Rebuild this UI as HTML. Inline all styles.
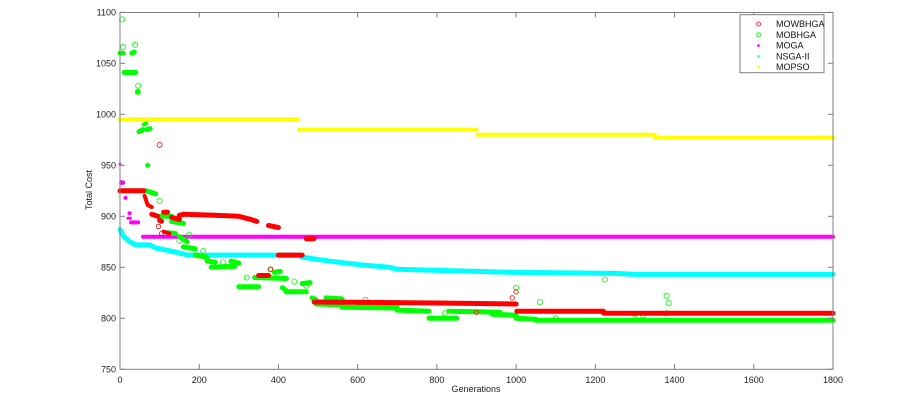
<!DOCTYPE html>
<html><head><meta charset="utf-8"><style>
html,body{margin:0;padding:0;background:#fff;width:920px;height:401px;overflow:hidden}
svg{display:block;font-family:"Liberation Sans",sans-serif}
</style></head><body>
<svg id="s" width="920" height="401" xmlns="http://www.w3.org/2000/svg"></svg>
<script>
var s=document.getElementById('s');
function X(g){return 120+g*(713/1800);}
function Y(c){return 369.3-(c-750)*1.02;}
var h='';
function line(pts,col,w){var p=pts.map(function(a){return X(a[0]).toFixed(1)+','+Y(a[1]).toFixed(1)}).join(' ');
 h+='<polyline points="'+p+'" fill="none" stroke="'+col+'" stroke-width="'+w+'" stroke-linecap="round" stroke-linejoin="round"/>';}
function circ(g,c,col,r){h+='<circle cx="'+X(g).toFixed(1)+'" cy="'+Y(c).toFixed(1)+'" r="'+(r||2.5)+'" fill="none" stroke="'+col+'" stroke-width="0.8"/>';}
function dot(g,c,col,r){h+='<circle cx="'+X(g).toFixed(1)+'" cy="'+Y(c).toFixed(1)+'" r="'+(r||2)+'" fill="'+col+'"/>';}
// MOPSO yellow
line([[0,995],[450,995]],'#ffff00',4);line([[452,985],[900,985]],'#ffff00',4);
line([[902,980],[1350,980]],'#ffff00',4);line([[1352,977],[1800,977]],'#ffff00',4);
// MOGA magenta
line([[58,880],[1800,880]],'#ff00ff',4);
dot(0,951,'#f0f',1.5);dot(4,933,'#f0f',2.5);dot(8,933,'#f0f',2);dot(14,918,'#f0f',2);dot(24,903,'#f0f',2);
line([[28,894],[46,894]],'#ff00ff',4);line([[20,898],[26,898]],'#ff00ff',3);
// NSGA-II cyan
line([[0,887],[10,880],[25,875],[40,872],[75,872],[90,869],[140,865],[170,862],[450,862],[460,860],[530,856],[620,852],[680,850],[700,848],[800,847],[900,846],[1000,845],[1250,844],[1300,843],[1800,843]],'#00ffff',5);
// MOBHGA green
var G='#00ff00';
line([[0,1060],[8,1060]],G,5);line([[10,1041],[40,1041]],G,5);line([[30,1060],[36,1061]],G,5);
dot(45,1022,G,3);line([[48,983],[58,985]],G,5);line([[60,990],[66,991]],G,4);line([[68,985],[76,986]],G,5);
line([[66,925],[90,922]],G,5);dot(70,950,G,2.5);
line([[100,900],[130,900]],G,5);line([[120,884],[140,883]],G,5);line([[130,895],[160,893]],G,5);
line([[150,880],[170,875]],G,5);line([[160,870],[190,868]],G,5);line([[190,862],[220,860]],G,5);
line([[220,856],[240,855]],G,5);line([[230,850],[290,851]],G,5);line([[280,856],[300,854]],G,5);
line([[300,831],[350,831]],G,5);line([[340,840],[420,839]],G,5);line([[390,845],[405,846]],G,5);
line([[410,830],[420,827]],G,5);line([[420,826],[470,826]],G,5);line([[460,834],[480,835]],G,5);
line([[485,820],[495,818]],G,5);line([[495,814],[560,813]],G,5);line([[520,820],[560,819]],G,5);
line([[560,811],[700,810]],G,5);line([[600,815],[700,813]],G,5);line([[700,808],[780,807]],G,5);
line([[780,800],[850,800]],G,5);line([[830,807],[960,806]],G,5);line([[940,804],[1000,803]],G,5);
line([[1000,800],[1050,799]],G,5);line([[1050,798],[1800,798]],G,5);
[[5,1093],[8,1066],[38,1068],[46,1028],[100,915],[150,876],[175,882],[210,866],[260,855],[320,840],[380,848],[440,836],[470,832],[560,818],[620,818],[700,815],[820,805],[1000,830],[1060,816],[1100,800],[1225,838],[1380,822],[1385,815],[1380,805],[1220,806],[1300,804],[1320,803]].forEach(function(a){circ(a[0],a[1],'#00ff00',2.6)});
// MOWBHGA red
var R='#ff0000';
line([[0,925],[60,925]],R,5);line([[62,920],[70,911],[80,909]],R,4);circ(100,970,'#f00',2.5);
line([[80,902],[95,900]],R,5);line([[100,896],[105,895]],R,5);line([[110,904],[120,904]],R,5);
line([[130,899],[150,897]],R,5);line([[150,901],[160,902]],R,5);line([[160,902],[240,901]],R,5);
line([[240,901],[300,900],[330,897],[345,895]],R,5);line([[375,891],[400,889]],R,5);
line([[110,885],[125,883]],R,4);line([[350,842],[375,842]],R,5);line([[400,862],[460,862]],R,5);
line([[470,878],[490,878]],R,5);line([[490,816],[800,815],[1000,814]],R,5);line([[1002,807],[1220,807]],R,5);
line([[1222,805],[1800,805]],R,5);
[[97,890],[105,883],[380,848],[1000,826],[990,820],[900,806]].forEach(function(a){circ(a[0],a[1],'#f00',2.2)});
// axes
h+='<rect x="120" y="12.5" width="713" height="356.8" fill="none" stroke="#7f7f7f" stroke-width="1"/>';
for(var g=0;g<=1800;g+=200){var x=X(g);
 h+='<line x1="'+x+'" y1="369.3" x2="'+x+'" y2="364" stroke="#7f7f7f"/><line x1="'+x+'" y1="12.5" x2="'+x+'" y2="17.5" stroke="#7f7f7f"/>';
 h+='<text x="'+x+'" y="383" font-size="9" text-anchor="middle" fill="#222">'+g+'</text>';}
for(var c=750;c<=1100;c+=50){var y=Y(c);
 h+='<line x1="120" y1="'+y+'" x2="125" y2="'+y+'" stroke="#7f7f7f"/><line x1="833" y1="'+y+'" x2="828" y2="'+y+'" stroke="#7f7f7f"/>';
 h+='<text x="116" y="'+(y+3)+'" font-size="9" text-anchor="end" fill="#222">'+c+'</text>';}
h+='<text x="476" y="392" font-size="9" text-anchor="middle" fill="#222">Generations</text>';
h+='<text transform="translate(92,190) rotate(-90)" font-size="9" text-anchor="middle" fill="#222">Total Cost</text>';
// legend
h+='<rect x="740" y="14.7" width="84" height="58" fill="#fff" stroke="#7f7f7f"/>';
var L=[['MOWBHGA','#ff0000','c'],['MOBHGA','#00ff00','c'],['MOGA','#ff00ff','d'],['NSGA-II','#00ffff','d'],['MOPSO','#ffff00','d']];
L.forEach(function(a,i){var y=24+i*10.8;
 if(a[2]=='c')h+='<circle cx="758.5" cy="'+y+'" r="2" fill="none" stroke="'+a[1]+'" stroke-width="0.8"/>';
 else h+='<circle cx="758.5" cy="'+y+'" r="1.3" fill="'+a[1]+'"/>';
 h+='<text x="776" y="'+(y+3)+'" font-size="9" fill="#111">'+a[0]+'</text>';});
s.innerHTML=h;
</script>
</body></html>
